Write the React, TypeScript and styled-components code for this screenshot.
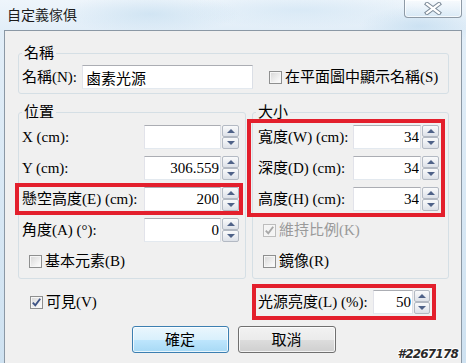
import React from "react";
import styled, { createGlobalStyle } from "styled-components";

const GlobalStyle = createGlobalStyle`
  html, body { margin: 0; padding: 0; }
  body {
    width: 466px; height: 363px; overflow: hidden;
    font-family: "Liberation Serif", "Noto Sans CJK TC", serif;
    color: #000;
  }
  * { box-sizing: border-box; }
`;

const CJK = `"Liberation Serif", "Noto Sans CJK TC", serif`;

const Window = styled.div`
  position: relative;
  width: 466px;
  height: 363px;
  overflow: hidden;
  display: flex;
  flex-direction: column;
  background:
    radial-gradient(ellipse 90px 20px at 150px 14px, rgba(190, 218, 238, 0.55), transparent),
    radial-gradient(ellipse 120px 18px at 300px 10px, rgba(200, 224, 242, 0.5), transparent),
    radial-gradient(ellipse 60px 20px at 420px 26px, rgba(180, 212, 236, 0.5), transparent),
    linear-gradient(180deg, #eef5fb 0px, #e2eef8 30px, #cfe2f1 363px);
`;

const TitleBar = styled.div`
  flex: none;
  height: 30px;
  display: flex;
  justify-content: space-between;
  align-items: flex-start;
  padding: 0 4px 0 7px;
`;

const Title = styled.div`
  margin-top: 5px;
  font: 14px/18px "Noto Sans CJK TC", sans-serif;
  color: #1b1b1b;
`;

const CloseButton = styled.div`
  width: 58px;
  height: 18px;
  border: 1px solid #8e9aa6;
  border-top: none;
  border-radius: 0 0 4px 4px;
  background: linear-gradient(180deg, rgba(255,255,255,0.55), rgba(214,232,246,0.6));
  box-shadow: inset 0 0 0 1px rgba(255,255,255,0.7);
  display: flex;
  align-items: center;
  justify-content: center;
`;

const Client = styled.div`
  flex: 1;
  margin: 0 4px;
  border: 1px solid #8b98a5;
  border-bottom: none;
  background: #f0f0f0;
  padding: 13px 12px 0 13px;
  display: flex;
  flex-direction: column;
`;

const Group = styled.fieldset`
  margin: 0;
  padding: 0;
  min-width: 0;
  border: 1px solid #d5dfe5;
  border-radius: 3px;
`;

const Legend = styled.legend`
  margin-left: 3px;
  padding: 0 2px;
  font: 15px/18px ${CJK};
`;

const GroupBody = styled.div<{ $pad: string }>`
  padding: ${(p) => p.$pad};
  display: flex;
  flex-direction: column;
  gap: 7px;
`;

const NameRow = styled.div`
  height: 24px;
  display: flex;
  align-items: center;
  padding-left: 3px;
`;

const Label = styled.span<{ $w?: number; $disabled?: boolean }>`
  font: 15px/18px ${CJK};
  white-space: nowrap;
  color: ${(p) => (p.$disabled ? "#9a9a9a" : "#000")};
  ${(p) => (p.$w ? `width: ${p.$w}px; flex: none;` : "")}
`;

const TextBox = styled.input`
  width: 171px;
  height: 24px;
  border: 1px solid;
  border-color: #abadb3 #dbdfe6 #e3e9ef #e2e3ea;
  background: #fff;
  padding: 0 3px;
  font: 15px/22px ${CJK};
  color: #000;
  outline: none;
`;

const Columns = styled.div`
  display: grid;
  grid-template-columns: 228px 197px;
  column-gap: 6px;
  margin-top: 9px;
`;

const FieldRow = styled.div<{ $indent: number }>`
  height: 24px;
  display: flex;
  align-items: center;
  justify-content: space-between;
  padding-left: ${(p) => p.$indent}px;
`;

const Highlight = styled.div<{ $offset: number }>`
  display: flex;
  flex-direction: column;
  gap: 7px;
  outline: 4px solid #e31f2c;
  outline-offset: ${(p) => p.$offset}px;
  position: relative;
  z-index: 1;
`;

const Spin = styled.div`
  display: flex;
  gap: 1px;
  height: 24px;
  flex: none;
`;

const NumBox = styled.input<{ $w: number }>`
  width: ${(p) => p.$w}px;
  height: 24px;
  border: 1px solid;
  border-color: #abadb3 #dbdfe6 #e3e9ef #e2e3ea;
  background: #fff;
  padding: 0 1px 0 2px;
  text-align: right;
  font: 15px/22px ${CJK};
  color: #000;
  outline: none;
`;

const SpinButtons = styled.div<{ $w: number }>`
  width: ${(p) => p.$w}px;
  display: flex;
  flex-direction: column;
`;

const SpinBtn = styled.div<{ $down?: boolean }>`
  flex: 1;
  border: 1px solid #b3b9c3;
  border-radius: 2px;
  background: linear-gradient(180deg, #f9fafb 0%, #eceef2 50%, #dde1e8 100%);
  display: flex;
  align-items: center;
  justify-content: center;
  &::after {
    content: "";
    width: 0;
    height: 0;
    border-left: 4px solid transparent;
    border-right: 4px solid transparent;
    ${(p) =>
      p.$down
        ? "border-top: 4px solid #4f6288;"
        : "border-bottom: 4px solid #4f6288;"}
  }
`;

const CheckRow = styled.label<{ $indent: number }>`
  height: 24px;
  display: flex;
  align-items: center;
  gap: 3px;
  padding-left: ${(p) => p.$indent}px;
`;

const Box = styled.span<{ $disabled?: boolean }>`
  width: 13px;
  height: 13px;
  flex: none;
  border: 1px solid ${(p) => (p.$disabled ? "#bdbdbd" : "#8e8f8f")};
  background: ${(p) =>
    p.$disabled
      ? "#f4f4f4"
      : "linear-gradient(135deg, #d6d6d6 0%, #f4f4f4 70%, #fdfdfd 100%)"};
  box-shadow: inset 0 0 0 1px #f6f6f6;
  display: flex;
  align-items: center;
  justify-content: center;
`;

const BottomRow = styled.div`
  display: grid;
  grid-template-columns: 228px 197px;
  column-gap: 6px;
  margin-top: 11px;
  align-items: center;
`;

const BrightWrap = styled.div`
  padding-left: 6px;
  display: flex;
`;

const BrightRow = styled.div`
  width: 172px;
  height: 24px;
  display: flex;
  align-items: center;
  justify-content: space-between;
  outline: 4px solid #e31f2c;
  outline-offset: 2px;
`;

const Buttons = styled.div`
  display: flex;
  justify-content: center;
  gap: 9px;
  margin-top: 12px;
`;

const Button = styled.button<{ $default?: boolean }>`
  width: ${(p) => (p.$default ? 97 : 98)}px;
  height: 27px;
  border-radius: 3px;
  border: 1px solid ${(p) => (p.$default ? "#3c7fb1" : "#707070")};
  background: ${(p) =>
    p.$default
      ? "linear-gradient(180deg, #eaf6fd 0%, #d9f0fc 50%, #bee6fd 51%, #a7d9f5 100%)"
      : "linear-gradient(180deg, #f2f2f2 0%, #ebebeb 50%, #dddddd 51%, #cfcfcf 100%)"};
  box-shadow: inset 0 0 0 1px rgba(255, 255, 255, 0.75);
  font: 15px/18px ${CJK};
  color: #000;
  padding: 0;
`;

const Watermark = styled.div`
  position: absolute;
  right: 8px;
  bottom: 3px;
  font: italic bold 12px/12px "DejaVu Sans", sans-serif;
  color: #2a2a2a;
  letter-spacing: -0.8px;
  text-shadow: 1px 0 #fff, -1px 0 #fff, 0 1px #fff, 0 -1px #fff, 1px 1px #fff, -1px -1px #fff;
`;

const Check = ({ color }: { color: string }) => (
  <svg width="11" height="11" viewBox="0 0 11 11">
    <path d="M1.8 5.6 L4.3 8.3 L9.2 1.8" fill="none" stroke={color} strokeWidth="1.9" />
  </svg>
);

const CheckBox = ({
  label,
  checked,
  disabled,
  indent,
}: {
  label: string;
  checked?: boolean;
  disabled?: boolean;
  indent: number;
}) => (
  <CheckRow $indent={indent}>
    <Box $disabled={disabled}>{checked && <Check color={disabled ? "#a8a8a8" : "#3e5485"} />}</Box>
    <Label $disabled={disabled}>{label}</Label>
  </CheckRow>
);

const SpinBox = ({ value, w, bw = 17 }: { value: string; w: number; bw?: number }) => (
  <Spin>
    <NumBox $w={w} readOnly value={value} />
    <SpinButtons $w={bw}>
      <SpinBtn />
      <SpinBtn $down />
    </SpinButtons>
  </Spin>
);

const Field = ({
  label,
  value,
  w,
  indent,
}: {
  label: string;
  value: string;
  w: number;
  indent: number;
}) => (
  <FieldRow $indent={indent}>
    <Label>{label}</Label>
    <SpinBox value={value} w={w} />
  </FieldRow>
);

export default function App() {
  return (
    <>
      <GlobalStyle />
      <Window>
        <TitleBar>
          <Title>自定義傢俱</Title>
          <CloseButton>
            <svg width="18" height="13" viewBox="0 0 18 13">
              <path d="M3 2 L15 11 M15 2 L3 11" stroke="#7d8b99" strokeWidth="4.2" strokeLinecap="square" />
              <path d="M3 2 L15 11 M15 2 L3 11" stroke="#ffffff" strokeWidth="2.2" strokeLinecap="square" />
            </svg>
          </CloseButton>
        </TitleBar>
        <Client>
          <Group>
            <Legend>名稱</Legend>
            <GroupBody $pad="3px 0 4px 0">
              <NameRow>
                <Label $w={60}>名稱(N):</Label>
                <TextBox readOnly value="鹵素光源" />
                <CheckBox label="在平面圖中顯示名稱(S)" indent={16} />
              </NameRow>
            </GroupBody>
          </Group>
          <Columns>
            <Group>
              <Legend>位置</Legend>
              <GroupBody $pad="4px 6px 5px 0">
                <Field label="X (cm):" value="" w={77} indent={3} />
                <Field label="Y (cm):" value="306.559" w={77} indent={3} />
                <Highlight $offset={0}>
                  <Field label="懸空高度(E) (cm):" value="200" w={77} indent={3} />
                </Highlight>
                <Field label="角度(A) (°):" value="0" w={77} indent={3} />
                <CheckBox label="基本元素(B)" indent={10} />
              </GroupBody>
            </Group>
            <Group>
              <Legend>大小</Legend>
              <GroupBody $pad="4px 9px 5px 0">
                <Highlight $offset={2}>
                  <Field label="寬度(W) (cm):" value="34" w={68} indent={5} />
                  <Field label="深度(D) (cm):" value="34" w={68} indent={5} />
                  <Field label="高度(H) (cm):" value="34" w={68} indent={5} />
                </Highlight>
                <CheckBox label="維持比例(K)" checked disabled indent={10} />
                <CheckBox label="鏡像(R)" indent={10} />
              </GroupBody>
            </Group>
          </Columns>
          <BottomRow>
            <CheckBox label="可見(V)" checked indent={12} />
            <BrightWrap>
              <BrightRow>
                <Label>光源亮度(L) (%):</Label>
                <Spin>
                  <NumBox $w={40} readOnly value="50" />
                  <SpinButtons $w={16}>
                    <SpinBtn />
                    <SpinBtn $down />
                  </SpinButtons>
                </Spin>
              </BrightRow>
            </BrightWrap>
          </BottomRow>
          <Buttons>
            <Button $default>確定</Button>
            <Button>取消</Button>
          </Buttons>
        </Client>
        <Watermark>#2267178</Watermark>
      </Window>
    </>
  );
}
